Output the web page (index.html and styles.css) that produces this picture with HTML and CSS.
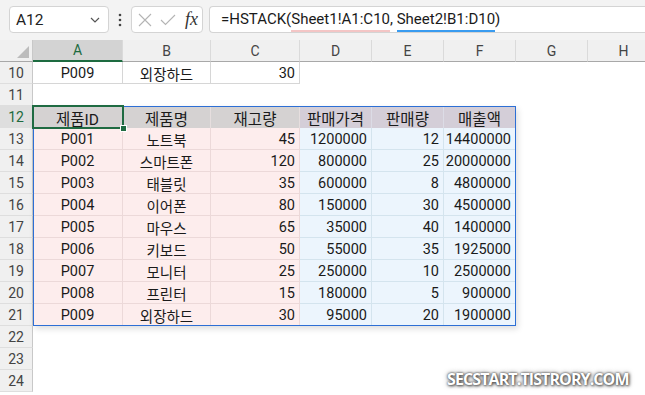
FILE: index.html
```html
<!DOCTYPE html>
<html lang="ko">
<head>
<meta charset="utf-8">
<title>HSTACK</title>
<link rel="stylesheet" href="styles.css">
</head>
<body>
<div class="app">
  <div class="fbar">
    <div class="namebox">
      <span class="nb-text">A12</span>
      <svg class="chev" width="10" height="6" viewBox="0 0 10 6"><path d="M1 1 L5 5 L9 1" fill="none" stroke="#555" stroke-width="1.2"/></svg>
    </div>
    <svg class="dots" width="4" height="14" viewBox="0 0 4 14"><circle cx="2" cy="2" r="1.3" fill="#444"/><circle cx="2" cy="7" r="1.3" fill="#444"/><circle cx="2" cy="12" r="1.3" fill="#444"/></svg>
    <div class="fxbox">
      <svg class="ico" width="14" height="14" viewBox="0 0 14 14"><path d="M1 1 L13 13 M13 1 L1 13" stroke="#b4b4b4" stroke-width="1.1" fill="none"/></svg>
      <svg class="ico" width="16" height="12" viewBox="0 0 16 12"><path d="M1 6 L5.5 10.5 L15 1" stroke="#b4b4b4" stroke-width="1.1" fill="none"/></svg>
      <span class="fx">fx</span>
    </div>
    <div class="formula">=HSTACK(<span class="r1">Sheet1!A1:C10</span>, <span class="r2">Sheet2!B1:D10</span>)</div>
  </div>

  <div class="sheet">
    <div class="grid">
      <div class="corner"><svg width="12" height="12" viewBox="0 0 12 12"><path d="M12 0 L12 12 L0 12 Z" fill="#bcbcbc"/></svg></div>
      <div class="ch sel">A</div><div class="ch">B</div><div class="ch">C</div><div class="ch">D</div><div class="ch">E</div><div class="ch">F</div><div class="ch">G</div><div class="ch">H</div>

      <div class="rh">10</div>
      <div class="c w ctr">P009</div><div class="c w ctr">외장하드</div><div class="c w num">30</div><div class="c"></div><div class="c"></div><div class="c"></div><div class="c"></div><div class="c"></div>

      <div class="rh">11</div>
      <div class="c"></div><div class="c"></div><div class="c"></div><div class="c"></div><div class="c"></div><div class="c"></div><div class="c"></div><div class="c"></div>

      <div class="rh rsel">12</div>
      <div class="c hp ctr hd">제품ID</div><div class="c hp ctr hd">제품명</div><div class="c hp ctr hd">재고량</div><div class="c hb ctr hd">판매가격</div><div class="c hb ctr hd">판매량</div><div class="c hb ctr hd">매출액</div><div class="c"></div><div class="c"></div>

      <div class="rh">13</div>
      <div class="c p ctr">P001</div><div class="c p ctr">노트북</div><div class="c p num">45</div><div class="c b num">1200000</div><div class="c b num">12</div><div class="c b num">14400000</div><div class="c"></div><div class="c"></div>

      <div class="rh">14</div>
      <div class="c p ctr">P002</div><div class="c p ctr">스마트폰</div><div class="c p num">120</div><div class="c b num">800000</div><div class="c b num">25</div><div class="c b num">20000000</div><div class="c"></div><div class="c"></div>

      <div class="rh">15</div>
      <div class="c p ctr">P003</div><div class="c p ctr">태블릿</div><div class="c p num">35</div><div class="c b num">600000</div><div class="c b num">8</div><div class="c b num">4800000</div><div class="c"></div><div class="c"></div>

      <div class="rh">16</div>
      <div class="c p ctr">P004</div><div class="c p ctr">이어폰</div><div class="c p num">80</div><div class="c b num">150000</div><div class="c b num">30</div><div class="c b num">4500000</div><div class="c"></div><div class="c"></div>

      <div class="rh">17</div>
      <div class="c p ctr">P005</div><div class="c p ctr">마우스</div><div class="c p num">65</div><div class="c b num">35000</div><div class="c b num">40</div><div class="c b num">1400000</div><div class="c"></div><div class="c"></div>

      <div class="rh">18</div>
      <div class="c p ctr">P006</div><div class="c p ctr">키보드</div><div class="c p num">50</div><div class="c b num">55000</div><div class="c b num">35</div><div class="c b num">1925000</div><div class="c"></div><div class="c"></div>

      <div class="rh">19</div>
      <div class="c p ctr">P007</div><div class="c p ctr">모니터</div><div class="c p num">25</div><div class="c b num">250000</div><div class="c b num">10</div><div class="c b num">2500000</div><div class="c"></div><div class="c"></div>

      <div class="rh">20</div>
      <div class="c p ctr">P008</div><div class="c p ctr">프린터</div><div class="c p num">15</div><div class="c b num">180000</div><div class="c b num">5</div><div class="c b num">900000</div><div class="c"></div><div class="c"></div>

      <div class="rh">21</div>
      <div class="c p ctr">P009</div><div class="c p ctr">외장하드</div><div class="c p num">30</div><div class="c b num">95000</div><div class="c b num">20</div><div class="c b num">1900000</div><div class="c"></div><div class="c"></div>

      <div class="rh">22</div>
      <div class="c"></div><div class="c"></div><div class="c"></div><div class="c"></div><div class="c"></div><div class="c"></div><div class="c"></div><div class="c"></div>

      <div class="rh">23</div>
      <div class="c"></div><div class="c"></div><div class="c"></div><div class="c"></div><div class="c"></div><div class="c"></div><div class="c"></div><div class="c"></div>

      <div class="rh">24</div>
      <div class="c"></div><div class="c"></div><div class="c"></div><div class="c"></div><div class="c"></div><div class="c"></div><div class="c"></div><div class="c"></div>
    </div>
    <div class="spill"></div>
    <div class="selbox"><div class="handle"></div></div>
  </div>

  <div class="wm">SECSTART.TISTRORY.COM</div>
</div>
</body>
</html>
```

FILE: styles.css
```css
* { box-sizing: border-box; }
body { margin: 0; background: #fff; }
.app {
  position: relative;
  width: 645px;
  height: 395px;
  overflow: hidden;
  font-family: Roboto, "Noto Sans CJK KR", sans-serif;
  color: #1a1a1a;
}
.fbar {
  height: 40px;
  background: #f3f3f3;
  display: flex;
  align-items: flex-start;
  padding: 6px 0 0 9px;
}
.namebox {
  width: 100px;
  height: 27px;
  background: #fff;
  border: 1px solid #d4d4d4;
  border-radius: 4px;
  display: flex;
  align-items: center;
  justify-content: space-between;
  padding: 0 8px 0 6px;
}
.nb-text { font-size: 15.5px; color: #222; }
.chev { margin-top: 1px; }
.dots { margin: 7px 0 0 9px; }
.fxbox {
  margin-left: 9px;
  width: 72px;
  height: 27px;
  background: #fff;
  border: 1px solid #d4d4d4;
  border-radius: 4px;
  display: flex;
  align-items: center;
  padding: 0 4px 0 6px;
  gap: 8px;
}
.fx {
  font-family: "Liberation Serif", serif;
  font-style: italic;
  font-size: 18px;
  color: #333;
  margin-left: 1px;
}
.formula {
  margin-left: 6px;
  flex: 1;
  height: 27px;
  background: #fff;
  border: 1px solid #d4d4d4;
  border-right: none;
  border-radius: 4px 0 0 4px;
  padding: 0 0 0 11px;
  font-size: 15px;
  line-height: 24px;
  color: #1a1a1a;
  white-space: nowrap;
}
.r1, .r2 {
  display: inline-block;
  line-height: 21px;
  border-bottom: 2px solid;
}
.r1 { border-color: #f4c6c6; }
.r2 { border-color: #3a9cf0; }

.sheet { position: relative; }
.grid {
  display: grid;
  grid-template-columns: 33px 90px 88px 89px 72px 72px 72px 72px 72px;
  grid-template-rows: 22px;
  grid-auto-rows: 22px;
  width: 660px;
}
.corner {
  background: #f0f0f0;
  border-right: 1px solid #c8c8c8;
  border-bottom: 1px solid #a8a8a8;
  display: flex;
  align-items: flex-end;
  justify-content: flex-end;
  padding: 0 3px 3px 0;
}
.ch {
  background: #f0f0f0;
  border-right: 1px solid #dadada;
  border-bottom: 1px solid #a8a8a8;
  font-size: 14px;
  color: #444;
  display: flex;
  align-items: center;
  justify-content: center;
}
.ch.sel {
  background: #d3d3d3;
  color: #1d6b40;
  border-bottom: 2px solid #1d6b40;
}
.rh {
  background: #f0f0f0;
  border-right: 1px solid #c8c8c8;
  border-bottom: 1px solid #dedede;
  font-size: 14px;
  color: #444;
  display: flex;
  align-items: center;
  justify-content: center;
  padding-top: 1px;
}
.rh.rsel { background: #dedede; color: #1d6b40; }

.c {
  font-size: 14.5px;
  display: flex;
  align-items: center;
  padding: 1px 4px 0;
  white-space: nowrap;
  overflow: hidden;
}
.hd { font-size: 15.5px; }
.ctr { justify-content: center; }
.num { justify-content: flex-end; }
.w { border-right: 1px solid #d6d6d6; border-bottom: 1px solid #d6d6d6; }
.hp { background: #d5d2d2; border-right: 1px solid #e6dede; }
.hb { background: #d4ced8; border-right: 1px solid #dcdce6; }
.p { background: #fdeded; border-right: 1px solid #ecd9d9; border-bottom: 1px solid #ecd9d9; }
.b { background: #ecf5fd; border-right: 1px solid #d4e4ee; border-bottom: 1px solid #d4e4ee; }

.spill {
  position: absolute;
  left: 33px;
  top: 66px;
  width: 483px;
  height: 220px;
  border: 1px solid #2d6fd5;
  box-shadow: 2px 3px 6px rgba(0, 0, 0, 0.13);
  pointer-events: none;
}
.selbox {
  position: absolute;
  left: 32px;
  top: 65px;
  width: 92px;
  height: 24px;
  border: 2px solid #1f6b42;
}
.handle {
  position: absolute;
  right: -5px;
  bottom: -5px;
  width: 7px;
  height: 7px;
  background: #1f6b42;
  border: 1px solid #fff;
}
.wm {
  position: absolute;
  left: 447px;
  top: 368px;
  font-family: "Open Sans", sans-serif;
  font-weight: 700;
  font-size: 16px;
  letter-spacing: -0.9px;
  color: #fff;
  text-shadow: 0 0 2px #444, 1px 1px 3px #555, 0 0 5px #777;
}
```
